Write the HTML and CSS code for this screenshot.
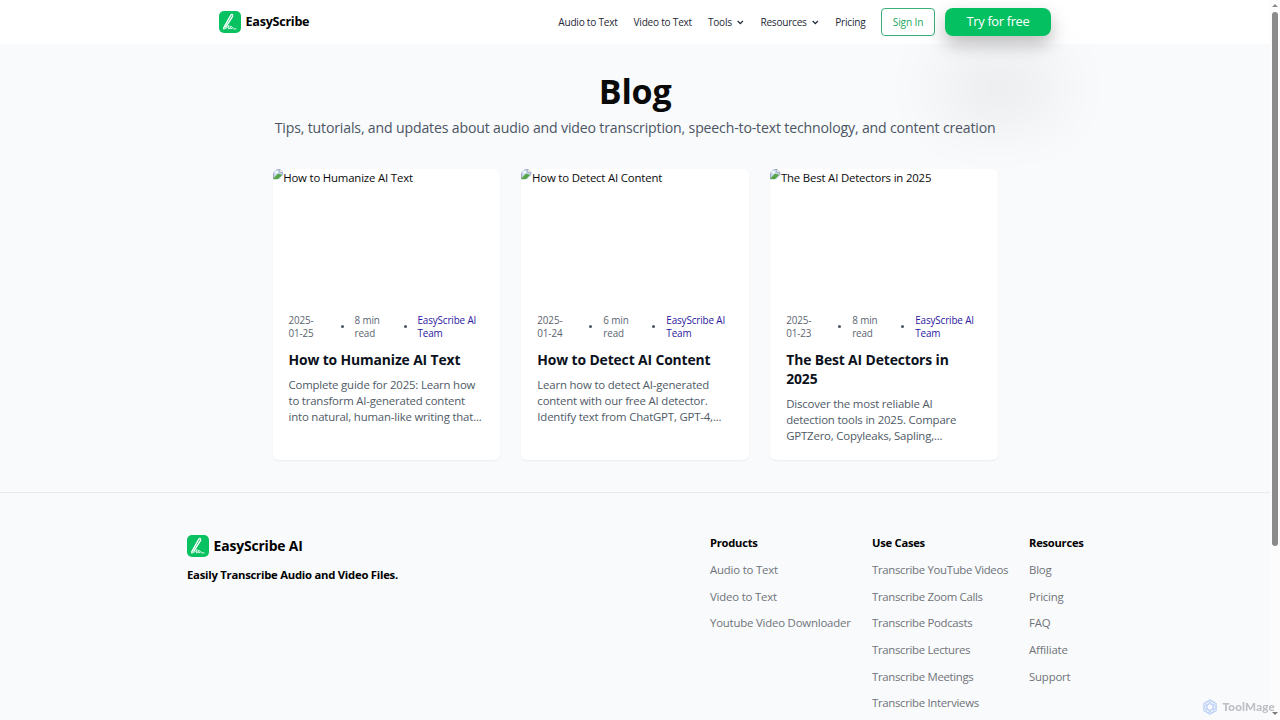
FILE: index.html
```html
<!DOCTYPE html>
<html lang="en">
<head>
    <meta charset="UTF-8">
    <meta name="viewport" content="width=device-width, initial-scale=1.0">
    <title>Blog - EasyScribe</title>
    <link rel="stylesheet" href="styles.css">
</head>
<body>
    <svg class="defs" width="0" height="0">
        <symbol id="logo" viewBox="0 0 22 22">
            <rect width="22" height="22" rx="5" fill="#08c160"/>
            <path d="M4.8 16.6L11.8 4.2Q13 2.8 13.7 4.2M6.8 16.2L13.6 5.4" fill="none" stroke="#fff" stroke-width="1.3" stroke-linecap="round"/>
            <path d="M4.8 16.6L4.6 18.2C7.5 17.4 9.3 15.8 9.9 14.4C9.9 16 9.4 17 9.6 18C10.8 17.4 11.4 16.2 12.2 15C11.9 16.2 11.6 17 11.9 18C12.7 17.5 13.2 16.9 13.8 16.5C13.7 17.8 14.7 18.1 17 17.9" fill="none" stroke="#fff" stroke-width=".9" stroke-linecap="round"/>
        </symbol>
        <symbol id="chevron" viewBox="0 0 8 8">
            <path d="M1.6 2.8L4 5.2L6.4 2.8" fill="none" stroke="#1f2937" stroke-width="1.2"/>
        </symbol>
        <symbol id="broken" viewBox="0 0 11 11">
            <path d="M0 0H7L10.5 3.5V10.5H0Z" fill="#c6d5f0"/>
            <path d="M.4 10.5V.4H7L10.2 3.6V6" fill="none" stroke="#8f98a3" stroke-width=".8"/>
            <path d="M7 .4V3.6H10.2" fill="#fff" stroke="#8f98a3" stroke-width=".7"/>
            <circle cx="3.6" cy="3.4" r="1.4" fill="#fff"/>
            <path d="M.6 10.6V9.4L5 5L9.6 6L5 10.6Z" fill="#55a546"/>
            <path d="M5.4 11L11 6.2V11Z" fill="#fff"/>
        </symbol>
    </svg>

    <header class="header">
        <div class="header-inner">
            <a class="brand"><svg class="logo"><use href="#logo"/></svg>EasyScribe</a>
            <nav class="nav">
                <a>Audio to Text</a>
                <a>Video to Text</a>
                <a>Tools<svg class="chevron"><use href="#chevron"/></svg></a>
                <a>Resources<svg class="chevron"><use href="#chevron"/></svg></a>
                <a>Pricing</a>
            </nav>
            <a class="sign-in">Sign In</a>
            <a class="try">Try for free</a>
        </div>
    </header>

    <main class="main">
        <h1>Blog</h1>
        <p class="subtitle">Tips, tutorials, and updates about audio and video transcription, speech-to-text technology, and content creation</p>
        <div class="cards">
            <article class="card">
                <div class="cover"><svg class="broken"><use href="#broken"/></svg>How to Humanize AI Text</div>
                <div class="card-body">
                    <div class="meta">
                        <span>2025-<br>01-25</span><i></i><span>8 min<br>read</span><i></i><a>EasyScribe AI<br>Team</a>
                    </div>
                    <h2>How to Humanize AI Text</h2>
                    <p>Complete guide for 2025: Learn how<br>to transform AI-generated content<br>into natural, human-like writing that...</p>
                </div>
            </article>
            <article class="card">
                <div class="cover"><svg class="broken"><use href="#broken"/></svg>How to Detect AI Content</div>
                <div class="card-body">
                    <div class="meta">
                        <span>2025-<br>01-24</span><i></i><span>6 min<br>read</span><i></i><a>EasyScribe AI<br>Team</a>
                    </div>
                    <h2>How to Detect AI Content</h2>
                    <p>Learn how to detect AI-generated<br>content with our free AI detector.<br>Identify text from ChatGPT, GPT-4,...</p>
                </div>
            </article>
            <article class="card">
                <div class="cover"><svg class="broken"><use href="#broken"/></svg>The Best AI Detectors in 2025</div>
                <div class="card-body">
                    <div class="meta">
                        <span>2025-<br>01-23</span><i></i><span>8 min<br>read</span><i></i><a>EasyScribe AI<br>Team</a>
                    </div>
                    <h2>The Best AI Detectors in<br>2025</h2>
                    <p>Discover the most reliable AI<br>detection tools in 2025. Compare<br>GPTZero, Copyleaks, Sapling,...</p>
                </div>
            </article>
        </div>
    </main>

    <footer class="footer">
        <div class="footer-inner">
            <div class="about">
                <a class="brand brand-footer"><svg class="logo"><use href="#logo"/></svg>EasyScribe AI</a>
                <p>Easily Transcribe Audio and Video Files.</p>
            </div>
            <div class="links">
                <div class="col col-products">
                    <h3>Products</h3>
                    <a>Audio to Text</a>
                    <a>Video to Text</a>
                    <a>Youtube Video Downloader</a>
                </div>
                <div class="col col-cases">
                    <h3>Use Cases</h3>
                    <a>Transcribe YouTube Videos</a>
                    <a>Transcribe Zoom Calls</a>
                    <a>Transcribe Podcasts</a>
                    <a>Transcribe Lectures</a>
                    <a>Transcribe Meetings</a>
                    <a>Transcribe Interviews</a>
                </div>
                <div class="col col-resources">
                    <h3>Resources</h3>
                    <a>Blog</a>
                    <a>Pricing</a>
                    <a>FAQ</a>
                    <a>Affiliate</a>
                    <a>Support</a>
                </div>
            </div>
        </div>
    </footer>

    <div class="scrollbar">
        <span class="arrow-up"></span>
        <span class="thumb"></span>
        <span class="arrow-down"></span>
    </div>
    <div class="watermark">
        <svg width="16" height="16" viewBox="0 0 16 16" fill="none" stroke="#bdd0f5" stroke-width="1.1">
            <path d="M8 .8L14.2 4.4V11.6L8 15.2L1.8 11.6V4.4Z" stroke-linejoin="round"/>
            <ellipse cx="8" cy="8" rx="6" ry="3"/>
            <ellipse cx="8" cy="8" rx="6" ry="3" transform="rotate(60 8 8)"/>
            <ellipse cx="8" cy="8" rx="6" ry="3" transform="rotate(120 8 8)"/>
        </svg>
        ToolMage
    </div>
</body>
</html>
```
FILE: styles.css
```css
* { box-sizing: border-box; }
body {
    margin: 0;
    width: 1270px;
    height: 720px;
    overflow: hidden;
    background-color: #f9fafc;
    font-family: "Open Sans", sans-serif;
    font-size: 11.4px;
    letter-spacing: -0.18px;
    color: #0a0a0a;
    white-space: nowrap;
}
h1, h2, h3, p { margin: 0; }
.defs { position: absolute; }

.header {
    width: 1280px;
    height: 44px;
    background-color: #fff;
}
.header-inner {
    display: flex;
    align-items: center;
    width: 832px;
    height: 44px;
    margin-left: 219px;
}
.brand {
    display: flex;
    align-items: center;
    gap: 4.6px;
    font-size: 12.6px;
    font-weight: 700;
    line-height: 20px;
    letter-spacing: -0.28px;
    color: #000;
}
.logo {
    width: 22px;
    height: 22px;
}
.nav {
    display: flex;
    gap: 16px;
    margin-left: auto;
    padding-bottom: 1px;
    font-size: 10.1px;
    letter-spacing: -0.24px;
    color: #1f2937;
}
.nav a {
    display: flex;
    align-items: center;
}
.chevron {
    width: 8.6px;
    height: 8.6px;
    margin: 1px 0 0 4px;
}
.sign-in {
    width: 54px;
    height: 28px;
    margin-left: 15.6px;
    border: 1px solid #3dae7a;
    border-radius: 4px;
    font-size: 10.2px;
    line-height: 26px;
    text-align: center;
    color: #22a75d;
}
.try {
    width: 106px;
    height: 28px;
    margin-left: 10px;
    border-radius: 8px;
    background-color: #05c060;
    box-shadow: 0 8px 18px rgba(0, 0, 0, 0.26), 0 66px 70px rgba(0, 0, 0, 0.16);
    font-size: 12.9px;
    line-height: 26px;
    letter-spacing: -0.35px;
    text-align: center;
    color: #fff;
}

.main {
    width: 725.3px;
    height: 448px;
    margin-left: 272.5px;
    padding-top: 25px;
}
h1 {
    font-size: 34px;
    line-height: 44px;
    letter-spacing: -0.2px;
    text-align: center;
}
.subtitle {
    margin-top: 5px;
    font-size: 14.1px;
    line-height: 19px;
    letter-spacing: -0.16px;
    text-align: center;
    color: #4b5563;
}
.cards {
    display: grid;
    grid-template-columns: repeat(3, 1fr);
    gap: 21.3px;
    height: 291px;
    margin-top: 32px;
}
.card {
    overflow: hidden;
    border-radius: 6px;
    background-color: #fff;
    box-shadow: 0 1px 2px rgba(0, 0, 0, 0.06);
}
.cover {
    display: flex;
    height: 128px;
    line-height: 17px;
}
.broken {
    width: 10.7px;
    height: 10.7px;
}
.card-body { padding: 16px; }
.meta {
    display: grid;
    grid-template-columns: 52px 14px 49px 14px 1fr;
    align-items: center;
    padding-top: 0.5px;
    font-size: 9.9px;
    line-height: 13.3px;
    letter-spacing: -0.14px;
    color: #5b6470;
}
.meta i {
    width: 3px;
    height: 3px;
    border-radius: 50%;
    background-color: #4b5563;
}
.meta a { color: #2a17a0; }
h2 {
    margin-top: 9.5px;
    font-size: 13.9px;
    line-height: 19px;
    letter-spacing: -0.13px;
    color: #0b1120;
}
.card-body p {
    margin-top: 8px;
    line-height: 16px;
    color: #4f5a66;
}

.footer {
    width: 1270px;
    height: 228px;
    border-top: 1px solid #e8eaed;
}
.footer-inner {
    display: flex;
    justify-content: space-between;
    width: 896px;
    margin-left: 187px;
    padding-top: 42px;
}
.brand-footer {
    font-size: 13.9px;
    letter-spacing: -0.16px;
}
.about p {
    margin-top: 9px;
    font-size: 11.3px;
    font-weight: 700;
    line-height: 17px;
    letter-spacing: -0.25px;
    color: #000;
}
.links {
    display: flex;
    padding-top: 0.4px;
}
.col {
    display: flex;
    flex-direction: column;
    gap: 10.67px;
    line-height: 16px;
    color: #6f7378;
}
.col-products {
    width: 162px;
    letter-spacing: -0.2px;
}
.col-cases {
    width: 157px;
    letter-spacing: -0.32px;
}
.col-resources { width: 54px; }
h3 {
    font-size: 11.2px;
    letter-spacing: -0.25px;
    color: #000;
}

.scrollbar {
    position: fixed;
    top: 0;
    right: 0;
    width: 10px;
    height: 720px;
    background-color: #fcfcfc;
}
.scrollbar span { position: absolute; }
.thumb {
    top: 12px;
    left: 2px;
    width: 6px;
    height: 534px;
    border-radius: 3px;
    background-color: #8b8b8b;
}
.arrow-up, .arrow-down {
    left: 2px;
    border: 3px solid transparent;
}
.arrow-up {
    top: 1px;
    border-bottom: 3px solid #8b8b8b;
}
.arrow-down {
    bottom: 2px;
    border-top: 3px solid #7b7b7b;
}
.watermark {
    position: fixed;
    right: 5px;
    bottom: 5px;
    display: flex;
    align-items: center;
    gap: 4px;
    font-family: Lato, sans-serif;
    font-size: 11.6px;
    font-weight: 900;
    line-height: 16px;
    letter-spacing: 0.2px;
    color: #bcbfc3;
}
```
